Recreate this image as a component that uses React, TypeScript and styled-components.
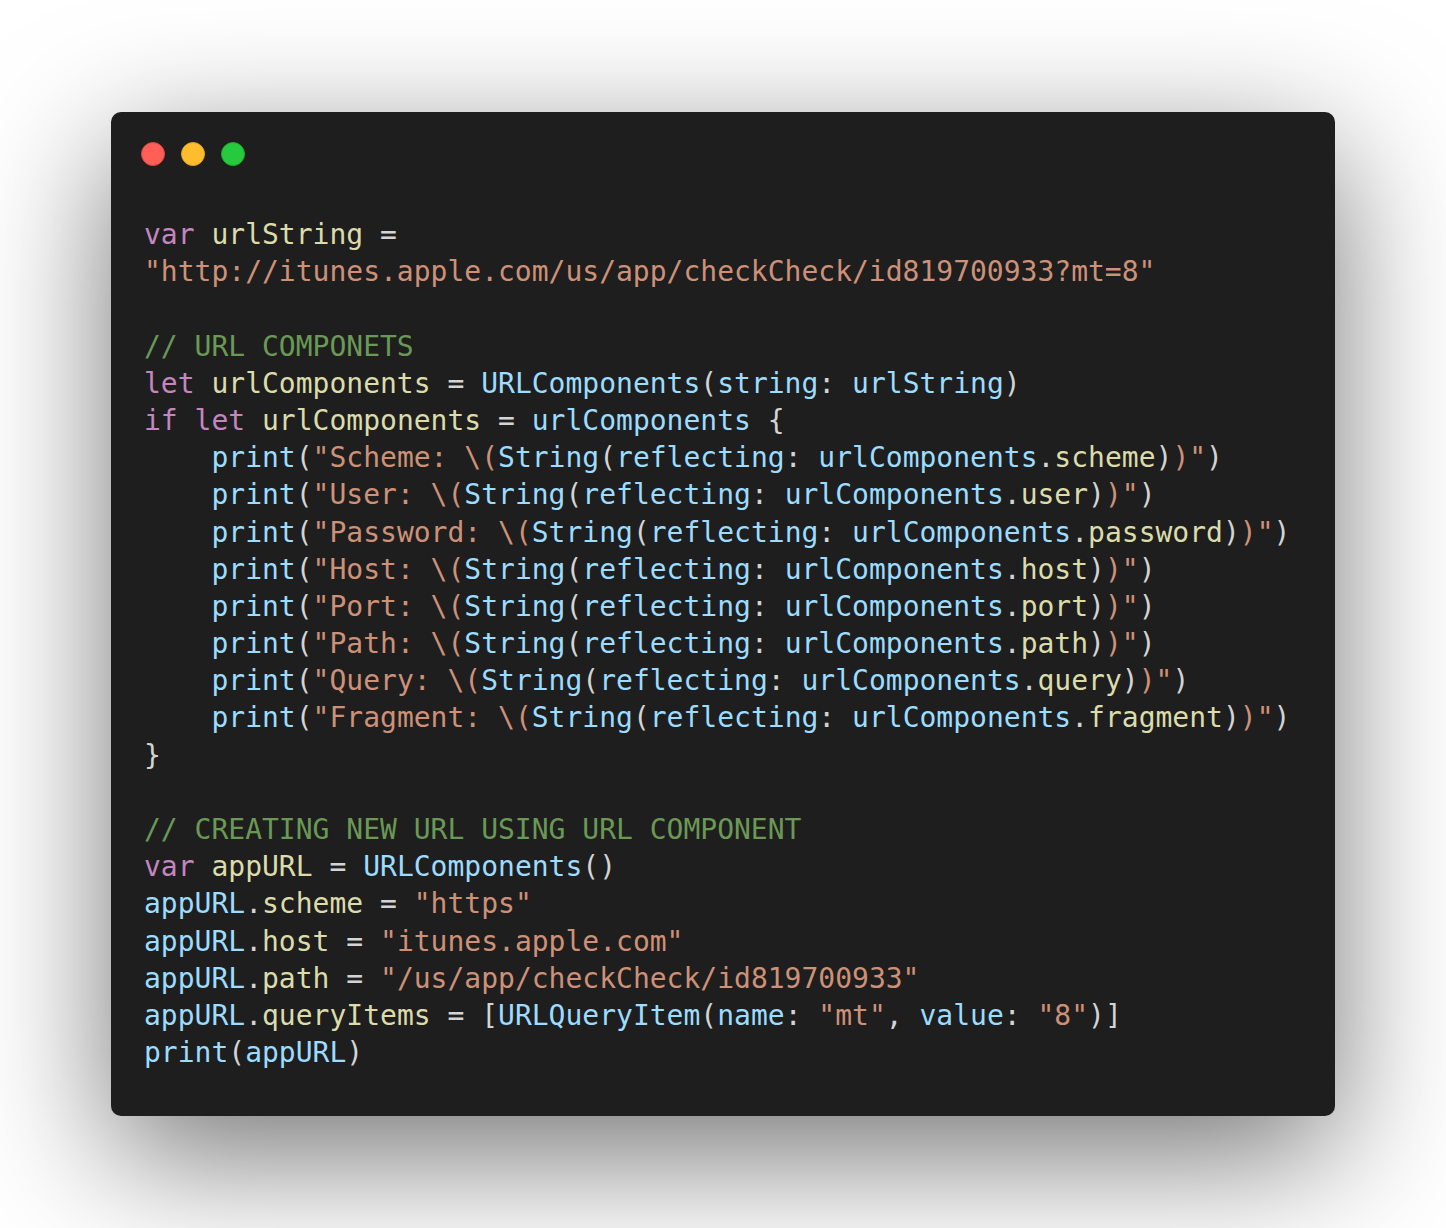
import React from "react";
import styled, { createGlobalStyle } from "styled-components";

const Global = createGlobalStyle`
  html, body { margin: 0; padding: 0; background: #ffffff; }
  body { font-family: "DejaVu Sans Mono", monospace; }
`;

type Kind = "k" | "v" | "s" | "c" | "b" | "p";

const colors: Record<Kind, string> = {
  k: "#c586c0",
  v: "#dcdcaa",
  s: "#ce9178",
  c: "#6a9955",
  b: "#9cdcfe",
  p: "#d4d4d4",
};

const Page = styled.div`
  width: 1446px;
  height: 1228px;
  box-sizing: border-box;
  padding: 112px 111px;
  background: #ffffff;
`;

const Window = styled.div`
  width: 1224px;
  height: 1004px;
  box-sizing: border-box;
  background: #1e1e1e;
  border-radius: 10px;
  box-shadow: 0 40px 136px rgba(0, 0, 0, 0.55);
  padding: 30px 32px 0 28px;
  display: flex;
  flex-direction: column;
`;

const Controls = styled.div`
  display: flex;
  gap: 16px;
  padding-left: 2px;
`;

const Dot = styled.span<{ $c: string; $b: string }>`
  width: 24px;
  height: 24px;
  border-radius: 50%;
  box-sizing: border-box;
  background: ${(p) => p.$c};
  border: 1px solid ${(p) => p.$b};
`;

const Code = styled.pre`
  margin: 50px 0 0 0;
  padding: 0 0 0 5px;
  font-family: "DejaVu Sans Mono", monospace;
  font-size: 28px;
  line-height: 37.2px;
  color: #d4d4d4;
  white-space: pre;
`;

const Line = styled.div`
  height: 37.2px;
`;

const Tok = styled.span<{ $k: Kind }>`
  color: ${(p) => colors[p.$k]};
`;

type T = [Kind, string];

const I = "    ";

const printLine = (label: string, field: string): T[] => [
  ["p", I],
  ["b", "print"],
  ["p", "("],
  ["s", `"${label}: \\(`],
  ["b", "String"],
  ["p", "("],
  ["b", "reflecting"],
  ["p", ": "],
  ["b", "urlComponents"],
  ["p", "."],
  ["v", field],
  ["p", ")"],
  ["s", ')"'],
  ["p", ")"],
];

const lines: T[][] = [
  [["k", "var"], ["p", " "], ["v", "urlString"], ["p", " ="]],
  [["s", '"http://itunes.apple.com/us/app/checkCheck/id819700933?mt=8"']],
  [],
  [["c", "// URL COMPONETS"]],
  [
    ["k", "let"],
    ["p", " "],
    ["v", "urlComponents"],
    ["p", " = "],
    ["b", "URLComponents"],
    ["p", "("],
    ["b", "string"],
    ["p", ": "],
    ["b", "urlString"],
    ["p", ")"],
  ],
  [
    ["k", "if let"],
    ["p", " "],
    ["v", "urlComponents"],
    ["p", " = "],
    ["b", "urlComponents"],
    ["p", " {"],
  ],
  printLine("Scheme", "scheme"),
  printLine("User", "user"),
  printLine("Password", "password"),
  printLine("Host", "host"),
  printLine("Port", "port"),
  printLine("Path", "path"),
  printLine("Query", "query"),
  printLine("Fragment", "fragment"),
  [["p", "}"]],
  [],
  [["c", "// CREATING NEW URL USING URL COMPONENT"]],
  [
    ["k", "var"],
    ["p", " "],
    ["v", "appURL"],
    ["p", " = "],
    ["b", "URLComponents"],
    ["p", "()"],
  ],
  [["b", "appURL"], ["p", "."], ["v", "scheme"], ["p", " = "], ["s", '"https"']],
  [["b", "appURL"], ["p", "."], ["v", "host"], ["p", " = "], ["s", '"itunes.apple.com"']],
  [
    ["b", "appURL"],
    ["p", "."],
    ["v", "path"],
    ["p", " = "],
    ["s", '"/us/app/checkCheck/id819700933"'],
  ],
  [
    ["b", "appURL"],
    ["p", "."],
    ["v", "queryItems"],
    ["p", " = ["],
    ["b", "URLQueryItem"],
    ["p", "("],
    ["b", "name"],
    ["p", ": "],
    ["s", '"mt"'],
    ["p", ", "],
    ["b", "value"],
    ["p", ": "],
    ["s", '"8"'],
    ["p", ")]"],
  ],
  [["b", "print"], ["p", "("], ["b", "appURL"], ["p", ")"]],
];

export default function App() {
  return (
    <>
      <Global />
      <Page>
        <Window>
          <Controls>
            <Dot $c="#ff5f56" $b="#e0443e" />
            <Dot $c="#ffbd2e" $b="#dea123" />
            <Dot $c="#27c93f" $b="#1aab29" />
          </Controls>
          <Code>
            {lines.map((ln, i) => (
              <Line key={i}>
                {ln.map(([k, t], j) => (
                  <Tok key={j} $k={k}>
                    {t}
                  </Tok>
                ))}
              </Line>
            ))}
          </Code>
        </Window>
      </Page>
    </>
  );
}
